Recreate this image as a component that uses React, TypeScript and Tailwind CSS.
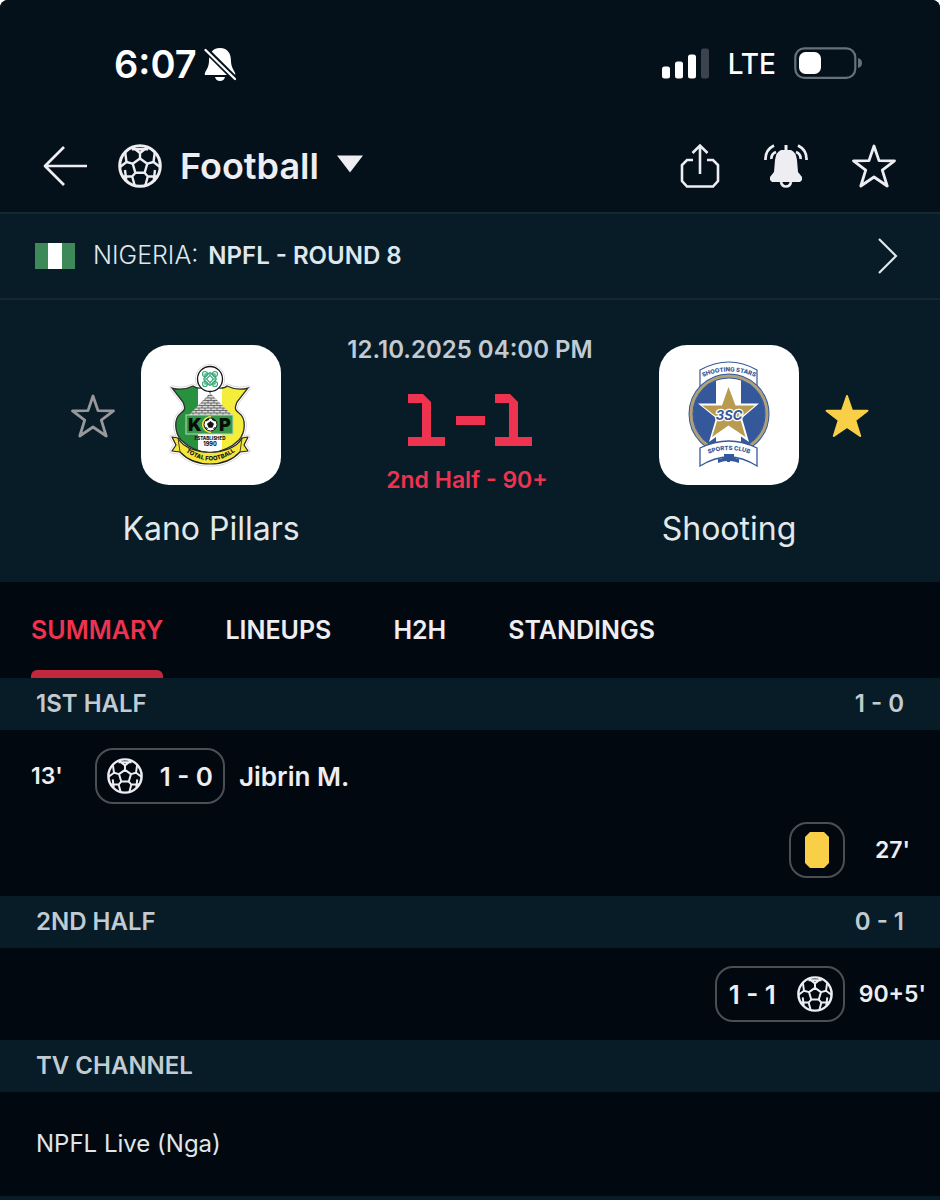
import type { ReactNode } from "react";

const STAR = "M22 2 27 16.600 42.500 16.800 30.300 26.200 35.200 42 22 33 8.800 42 13.700 26.200 1.500 16.800 17 16.600Z";

function Star({ className, filled }: { className: string; filled?: boolean }) {
  return (
    <svg viewBox="0 0 44 44" className={className} fill={filled ? "currentColor" : "none"} stroke="currentColor" strokeWidth={filled ? 2 : 2.8} strokeLinejoin="round" aria-hidden="true">
      <path d={STAR} />
    </svg>
  );
}

function Ball({ className }: { className: string }) {
  return (
    <svg viewBox="0 0 44 44" className={className} fill="none" stroke="currentColor" strokeWidth="2.400" strokeLinejoin="round" aria-hidden="true">
      <circle cx="22" cy="22" r="20.3" strokeWidth="3" />
      <path d="M22 14.500 29.300 19.700 26.600 28.800H17.400L14.700 19.700Z" />
      <path d="M22 14.500V9L15 3.500M22 9 29 3.500M14 5.200H30" />
      <path d="M29.300 19.700 35.500 18 36.800 8.500M35.500 18 42 23" />
      <path d="M14.700 19.700 8.500 18 7.200 8.500M8.500 18 2 23" />
      <path d="M26.600 28.800 29.800 32.500H39M29.800 32.500 27.300 41.500M37 26 35.800 36" />
      <path d="M17.400 28.800 14.200 32.500H5M14.200 32.500 16.700 41.500M7 26 8.200 36" />
    </svg>
  );
}

const SHIRT =
  "M31 43C38 45 46 44 52 41C55 43 59 44 62 42L69 47 76 42C79 44 84 43 86 41C92 44 100 45 107 43L96 57C94 62 93 65 98 68C106 74 104 88 98 95C91 102 80 107 69 108C58 107 47 102 40 95C34 88 32 74 40 68C45 65 44 62 42 57Z";

function KanoCrest() {
  return (
    <svg viewBox="0 0 140 140" className="size-35" role="img" aria-label="Kano Pillars crest">
      <defs>
        <clipPath id="shirt"><path d={SHIRT} /></clipPath>
        <path id="kanoMotto" d="M44 106Q69 125 95 106" />
        <pattern id="bricks" width="6" height="5" patternUnits="userSpaceOnUse">
          <rect width="6" height="5" fill="#dcdcdc" />
          <path d="M0 .5H6M0 3H6M1 0V3M4 3V5" stroke="#555" strokeWidth=".8" />
        </pattern>
      </defs>
      <g fill="#fff" stroke="#d4d2d6" strokeWidth="5" strokeLinejoin="round">
        <path d={SHIRT} />
        <circle cx="69" cy="34" r="12.500" />
        <path d="M31 92 43 97C53 110 85 110 95 97L107 92 103 100 107 106 99 107C84 123 54 123 39 107L31 106 35 100Z" />
      </g>
      <g fill="#fff" stroke="#fff" strokeWidth="3.500" strokeLinejoin="round">
        <path d={SHIRT} />
        <circle cx="69" cy="34" r="12.500" />
        <path d="M31 92 43 97C53 110 85 110 95 97L107 92 103 100 107 106 99 107C84 123 54 123 39 107L31 106 35 100Z" />
      </g>
      <g clipPath="url(#shirt)">
        <path fill="#fff" d="M30 40H110V120H30Z" />
        <path fill="#27913e" d="M30 40H57V120H30Z" />
        <path fill="#f5ed3b" d="M81 40H110V120H81Z" />
      </g>
      <path d={SHIRT} fill="none" stroke="#2b2f2b" strokeWidth="1.300" />
      <path d="M69 48 91 70H48Z" fill="url(#bricks)" />
      <rect x="45" y="70" width="47" height="19" fill="#36984a" stroke="#b8d9bd" />
      <text x="47" y="86" fontFamily="Inter, sans-serif" fontWeight="900" fontSize="18" fill="#050f08">K</text>
      <text x="78" y="86" fontFamily="Inter, sans-serif" fontWeight="900" fontSize="18" fill="#050f08">P</text>
      <path d="M70 71C58 72 58 87 70 88Z" fill="#f2e444" />
      <circle cx="69.500" cy="79.500" r="6.500" fill="#fff" stroke="#111" strokeWidth="1" />
      <path d="m69.500 76.500 3 2.200-1.200 3.600h-3.600l-1.200-3.600zM65 76l2-2 1 .500zM74 76l-2-2-1 .500zM64.500 82l2 2zM74.500 82l-2 2z" fill="#111" stroke="#111" strokeWidth=".8" />
      <text x="69" y="94.500" textAnchor="middle" fontFamily="Inter, sans-serif" fontWeight="800" fontSize="4.500" fill="#111">ESTABLISHED</text>
      <text x="69" y="100.500" textAnchor="middle" fontFamily="Inter, sans-serif" fontWeight="800" fontSize="5.500" fill="#111">1990</text>
      <path d="M31 92 37 93C47 112 91 112 101 93L107 92 103 100 107 106 99 107C84 123 54 123 39 107L31 106 35 100Z" fill="#f5e63c" stroke="#222" strokeWidth="1.200" strokeLinejoin="round" />
      <path d="M37 93 39 107M101 93 99 107" stroke="#222" strokeWidth=".8" />
      <text fontFamily="Inter, sans-serif" fontWeight="800" fontSize="6" fill="#171717"><textPath href="#kanoMotto" startOffset="50%" textAnchor="middle">TOTAL FOOTBALL</textPath></text>
      <circle cx="69" cy="34" r="12.500" fill="#fff" stroke="#151515" strokeWidth="1.300" />
      <g fill="none" stroke="#38a978" strokeWidth="1.200">
        <rect x="64" y="29" width="10" height="10" />
        <rect x="64" y="29" width="10" height="10" rx="2" transform="rotate(45 69 34)" />
        <rect x="66.500" y="31.500" width="5" height="5" transform="rotate(45 69 34)" />
        <circle cx="64" cy="29" r="2.500" /><circle cx="74" cy="29" r="2.500" /><circle cx="64" cy="39" r="2.500" /><circle cx="74" cy="39" r="2.500" />
      </g>
    </svg>
  );
}

function ShootingCrest() {
  return (
    <svg viewBox="0 0 140 140" className="size-35" role="img" aria-label="Shooting Stars crest">
      <defs>
        <clipPath id="disc"><circle cx="70" cy="69" r="36" /></clipPath>
        <path id="topMotto" d="M42 33Q70 20 98 33" />
        <path id="bottomMotto" d="M46 110Q70 100 94 110" />
      </defs>
      <path d="M41 48V25Q70 9 98 25V48" fill="#fff" stroke="#34589a" strokeWidth="1.200" />
      <circle cx="70" cy="69" r="38" fill="#fff" stroke="#34589a" strokeWidth="5" />
      <circle cx="70" cy="69" r="38" fill="none" stroke="#aea079" strokeWidth="3" />
      <g clipPath="url(#disc)"><path fill="#34589a" d="M30 30H57V110H30ZM82 30H110V110H82Z" /></g>
      <path d="M69.500 37 78 58.500H100L83 73 90 97 69.500 83 50 97 57 73 39 58.500H61Z" fill="#fff" />
      <path d="M69.500 42 76.500 60.500H96L81 73 86.500 92 69.500 80.500 53 92 59 73 43 60.500H63Z" fill="#b99b50" />
      <text x="70" y="74.500" textAnchor="middle" fontFamily="Inter, sans-serif" fontWeight="700" fontStyle="italic" fontSize="13" fill="#34589a" stroke="#fff" strokeWidth="2.500" paintOrder="stroke">3SC</text>
      <path d="M41 103Q70 89 98 103V121Q70 103 41 121Z" fill="#fff" stroke="#34589a" strokeWidth="1.300" />
      <path d="M65 109H75V112Q77 114 80 114V118Q75 116 71 116V117H68V116Q64 116 59 118V114Q63 114 65 112Z" fill="#34589a" />
      <g fontFamily="Inter, sans-serif" fontWeight="800" fill="#34589a">
        <text fontSize="6"><textPath href="#topMotto" startOffset="50%" textAnchor="middle">SHOOTING STARS</textPath></text>
        <text fontSize="6"><textPath href="#bottomMotto" startOffset="50%" textAnchor="middle">SPORTS CLUB</textPath></text>
      </g>
    </svg>
  );
}

function StatusBar() {
  return (
    <div className="flex h-32 items-center justify-between pr-19.5 pl-28.5 text-white">
      <div className="flex items-center gap-1.5">
        <span className="text-[38px] font-semibold">6:07</span>
        <svg viewBox="0 0 34 36" className="h-9 w-8.5" role="img" aria-label="Silent mode">
          <path d="M17 2C9 2 6 8 6 15 6 21 3 24 2 27Q1 29 3 29H31Q33 29 32 27C31 24 28 21 28 15 28 8 25 2 17 2ZM12 31H22Q21 35 17 35T12 31Z" fill="currentColor" />
          <path d="M3 4 32 33" stroke="#04111b" strokeWidth="6" />
          <path d="M2.500 4 32 33" stroke="currentColor" strokeWidth="2.300" strokeLinecap="round" />
        </svg>
      </div>
      <div className="flex items-center">
        <svg viewBox="0 0 48 31" className="h-8 w-12" fill="currentColor" role="img" aria-label="Signal strength">
          <rect y="18" width="8" height="12" rx="2.500" /><rect x="13" y="13" width="8" height="17" rx="2.500" /><rect x="26" y="6" width="8" height="24" rx="2.500" /><rect x="39" y="0" width="8" height="30" rx="2.500" fill="#3b444c" />
        </svg>
        <span className="ml-4.5 text-[28px] font-medium">LTE</span>
        <svg viewBox="0 0 68 32" className="mb-0.5 ml-4.5 h-8 w-17" role="img" aria-label="Battery">
          <rect x="1.300" y="1.300" width="60" height="29.500" rx="9" fill="none" stroke="#67717a" strokeWidth="2.200" /><rect x="5" y="5" width="22" height="22" rx="6.500" fill="#fff" /><path d="M64 11Q68 12 68 16T64 21Z" fill="#67717a" />
        </svg>
      </div>
    </div>
  );
}

function AppBar() {
  return (
    <header className="flex h-21 items-center justify-between pr-11 pb-2 pl-10.5 text-[#eeeef2]">
      <div className="flex items-center">
        <button type="button" aria-label="Back">
          <svg viewBox="0 0 46 42" className="h-10.5 w-11.5" fill="none" stroke="currentColor" strokeWidth="2.700"><path d="M45 21H3M22 2 3 21 22 40" strokeLinejoin="round" /></svg>
        </button>
        <button type="button" className="ml-7.5 flex items-center text-4xl font-semibold">
          <Ball className="mr-4.5 size-11" />
          Football
          <svg viewBox="0 0 26 17" className="mb-1 ml-4.5 h-4.5 w-6.5" fill="currentColor" aria-hidden="true"><path d="M0 0H26L13 17Z" /></svg>
        </button>
      </div>
      <div className="flex items-center gap-11">
        <button type="button" aria-label="Share">
          <svg viewBox="0 0 40 46" className="h-11.5 w-10" fill="none" stroke="currentColor" strokeWidth="2.600"><path d="M13 17H7L2 22V38L7 43.500H33L38 38V22L33 17H27M20 31V3M12.500 10 20 2.500 27.500 10" /></svg>
        </button>
        <button type="button" aria-label="Notifications">
          <svg viewBox="0 0 44 44" className="size-11" fill="none" stroke="currentColor" strokeWidth="2.700">
            <path d="M20.500 1H23.500V6H27Q32 8 33 16L34 28 38 33V36L36 38H8L6 36V33L10 28 11 16Q12 8 17 6H20.500Z" fill="currentColor" stroke="none" />
            <path d="M17 38Q18 42.500 22 42.500T27 38M10 1.500Q1 6 1.500 16M12 8Q7 10 7.500 15M34 1.500Q43 6 42.500 16M32 8Q37 10 36.500 15" />
          </svg>
        </button>
        <button type="button" aria-label="Add match to favourites"><Star className="size-11" /></button>
      </div>
    </header>
  );
}

function Team({ name, crest }: { name: string; crest: ReactNode }) {
  return (
    <div className="flex w-50 flex-col items-center pt-[11px]">
      <div className="overflow-hidden rounded-[28px] bg-white">{crest}</div>
      <h2 className="mt-6 text-[32px] leading-10 whitespace-nowrap text-[#e3e8eb]">{name}</h2>
    </div>
  );
}

function ScoreBoard() {
  return (
    <section className="flex h-70.5 items-start justify-between bg-[#071c27] px-[71px] pt-8.5">
      <div className="flex items-start">
        <button type="button" aria-label="Follow Kano Pillars" className="mt-15 -mr-1 text-[#98989c]"><Star className="size-11" /></button>
        <Team name="Kano Pillars" crest={<KanoCrest />} />
      </div>
      <div className="flex flex-col items-center font-semibold">
        <time dateTime="2025-10-12T16:00" className="text-2xl whitespace-nowrap text-[#c2cbd1]">12.10.2025 04:00 PM</time>
        <div className="mt-7 flex h-13 items-center" role="img" aria-label="1-1">
          <svg viewBox="0 0 126 52" className="h-13 w-31.5 text-[#ed334f]" fill="currentColor">
            <path d="M1 0H16L24 8V43H38V52H1V43H15V9H1ZM49 22H78V31H49ZM88 0H103L111 8V43H125V52H88V43H102V9H88Z" />
          </svg>
        </div>
        <p className="mt-4.5 mr-1.5 text-[23px] leading-8 text-[#ed334f]">2nd Half - 90+</p>
      </div>
      <div className="flex items-start">
        <Team name="Shooting" crest={<ShootingCrest />} />
        <button type="button" aria-label="Unfollow Shooting" className="mt-15 -ml-1 text-[#f8cf46]"><Star filled className="size-11" /></button>
      </div>
    </section>
  );
}

function SectionTitle({ title, score }: { title: string; score?: string }) {
  return (
    <div className="flex h-13 items-center justify-between bg-[#071c27] px-9 text-2xl font-semibold text-[#c2cbd1]">
      <h3>{title}</h3>
      {score && <span>{score}</span>}
    </div>
  );
}

export default function App() {
  return (
    <div className="bg-white">
      <main className="min-h-screen overflow-hidden rounded-t-lg bg-[#02080f] font-['Inter',sans-serif]">
        <div className="border-b-2 border-[#152730] bg-[#04111b]">
          <StatusBar />
          <AppBar />
        </div>
        <a href="#league" className="flex h-21.5 items-center border-b-2 border-[#152730] bg-[#071c27] pr-10.5 pl-[35px] text-[#dfe7ed]">
          <svg viewBox="0 0 40 26" className="mr-4.5 h-6.5 w-10" role="img" aria-label="Nigeria flag"><path fill="#fff" d="M0 0H40V26H0Z" /><path fill="#3d8a58" d="M0 0H13V26H0ZM27 0H40V26H27Z" /></svg>
          <span className="text-[25px] font-light">NIGERIA:</span>
          <span className="ml-2.5 text-2xl font-semibold">NPFL - ROUND 8</span>
          <svg viewBox="0 0 20 36" className="ml-auto h-9 w-5" fill="none" stroke="currentColor" strokeWidth="2.200" aria-hidden="true"><path d="m1 1 17 17L1 35" /></svg>
        </a>
        <ScoreBoard />
        <nav className="flex h-24 gap-[62px] px-[31px] text-[25px] leading-24 font-semibold text-[#eeeef2]">
          <a href="#summary" aria-current="page" className="flex flex-col text-[#ed334f]">
            <span className="h-22">SUMMARY</span>
            <span className="h-2 rounded-t-md bg-[#c1273d]" />
          </a>
          <a href="#lineups">LINEUPS</a>
          <a href="#h2h">H2H</a>
          <a href="#standings">STANDINGS</a>
        </nav>
        <SectionTitle title="1ST HALF" score="1 - 0" />
        <ol className="py-4.5 text-[#eeeef2]">
          <li className="flex h-14 items-center pl-[31px]">
            <span className="w-16 text-[23px] font-semibold">13'</span>
            <span className="flex h-14 w-32.5 items-center justify-between rounded-[18px] border-2 border-[#4b4f54] px-2.5 text-[26px] font-semibold"><Ball className="size-9" />1 - 0</span>
            <span className="ml-3.5 text-[26px] font-semibold">Jibrin M.</span>
          </li>
          <li className="mt-4.5 flex h-14 items-center justify-end pr-7.5">
            <span className="flex size-14 items-center justify-center rounded-[18px] border-2 border-[#4b4f54]">
              <svg viewBox="0 0 24 36" className="h-9 w-6" role="img" aria-label="Yellow card"><path d="M5 0H19L24 5V31L19 36H5L0 31V5Z" fill="#f8cf46" /></svg>
            </span>
            <span className="ml-7.5 text-[23px] font-semibold">27'</span>
          </li>
        </ol>
        <SectionTitle title="2ND HALF" score="0 - 1" />
        <ol className="py-4.5 text-[#eeeef2]">
          <li className="flex h-14 items-center justify-end pr-3.5">
            <span className="flex h-14 w-32.5 items-center justify-between rounded-[18px] border-2 border-[#4b4f54] pr-2.5 pl-3 text-[26px] font-semibold">1 - 1<Ball className="size-9" /></span>
            <span className="ml-3.5 text-[23px] font-semibold">90+5'</span>
          </li>
        </ol>
        <SectionTitle title="TV CHANNEL" />
        <p className="flex h-27 items-center border-b-4 border-[#071c27] px-9 text-2xl text-[#dfe5e9]">NPFL Live (Nga)</p>
      </main>
    </div>
  );
}
